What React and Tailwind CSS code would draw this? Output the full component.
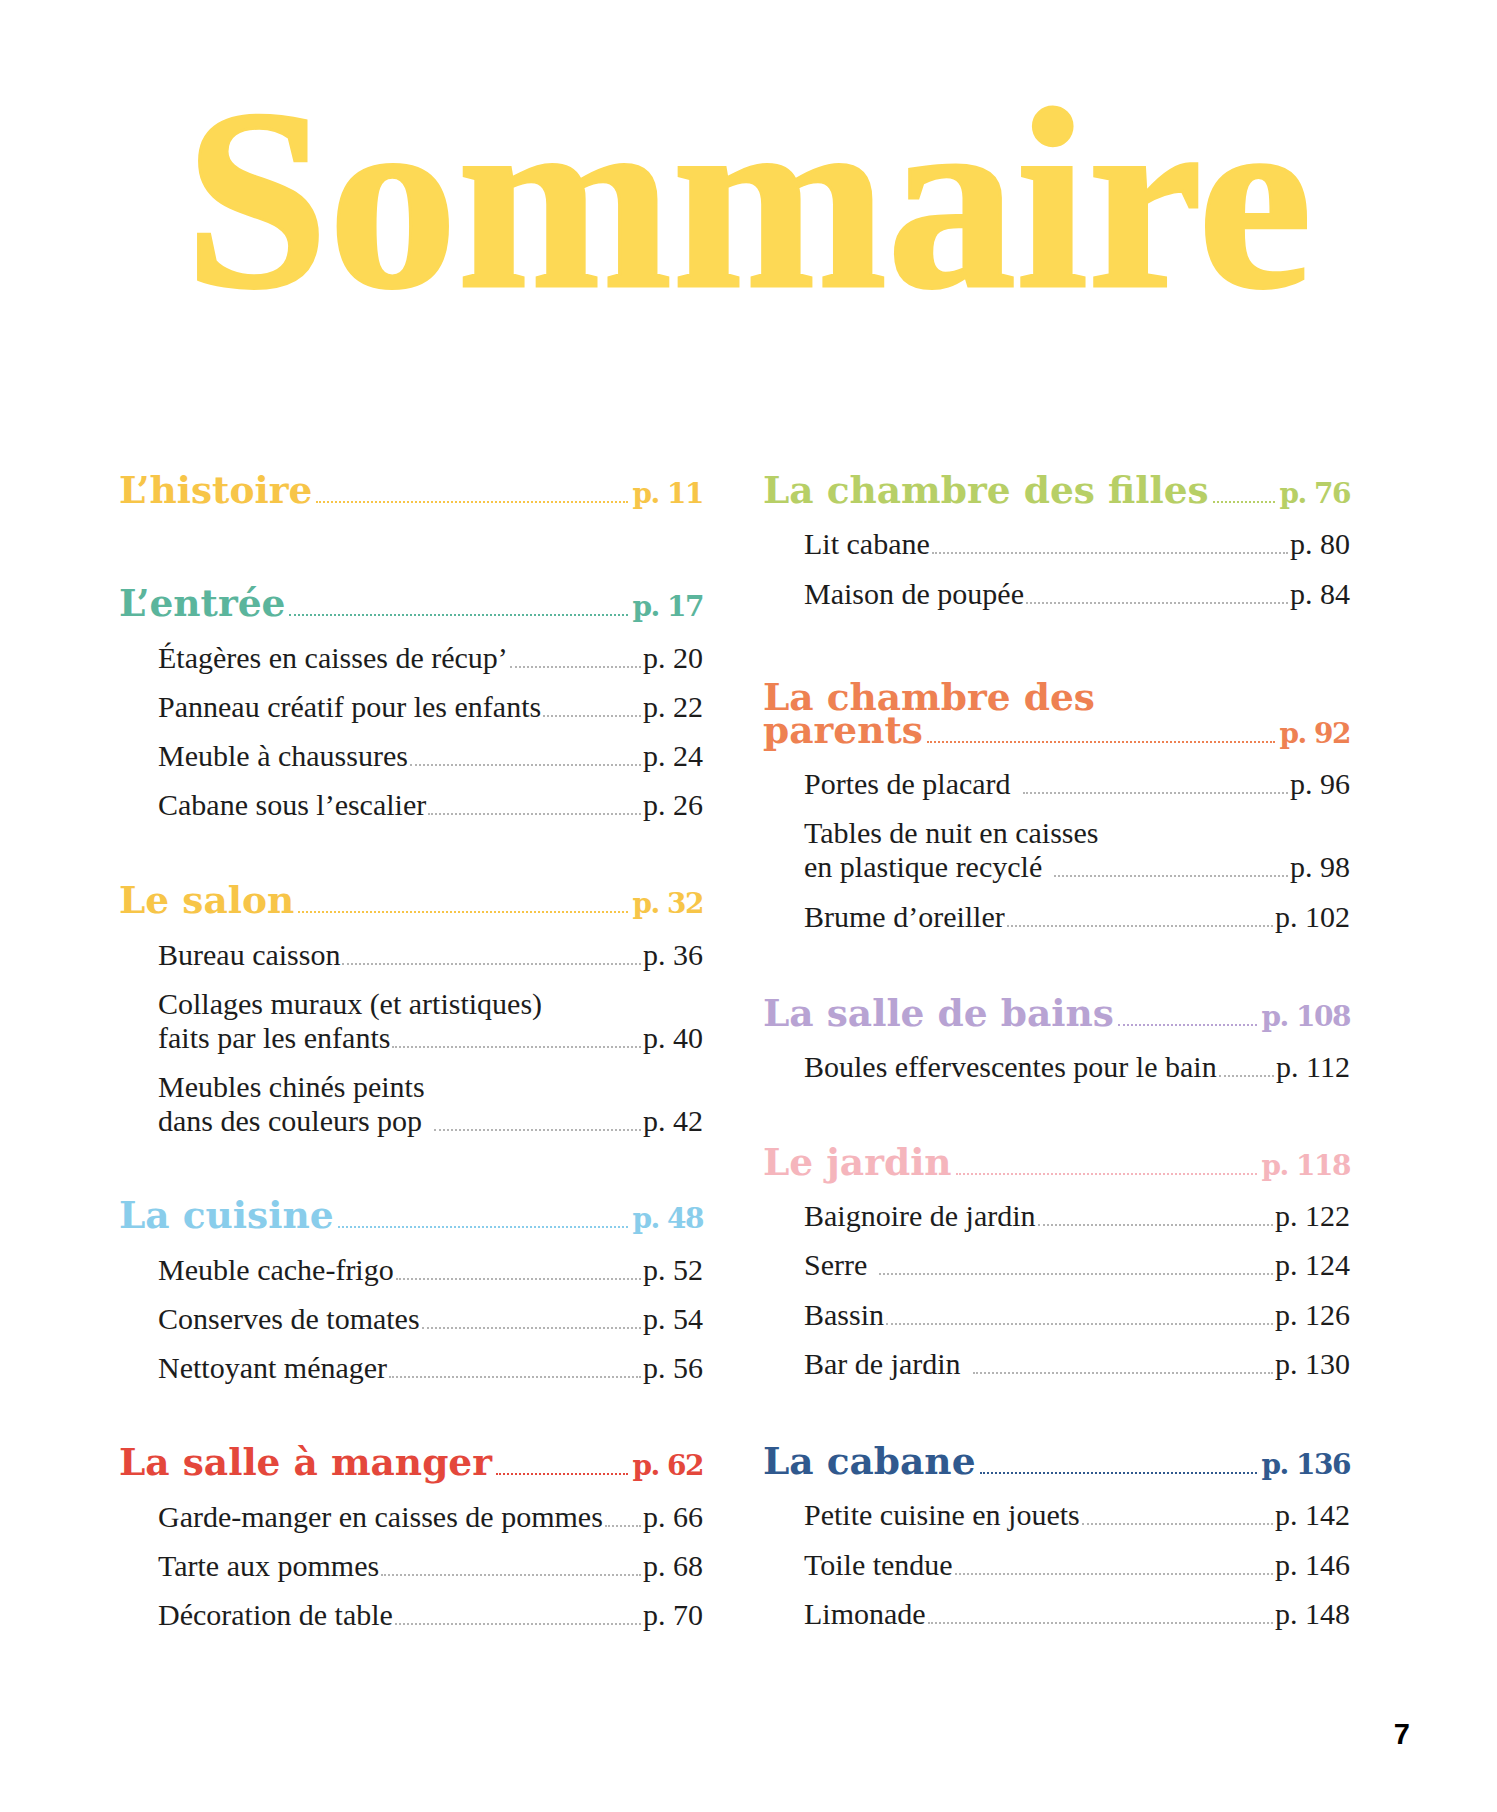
const headFont = "font-['DejaVu_Serif',serif] font-bold";
const bodyFont = "font-['Liberation_Serif','Times_New_Roman',serif]";

const leftSections = [
  {
    title: 'L’histoire',
    page: 'p. 11',
    color: 'text-[#F7C548]',
    dots: 'border-[#F7C548]',
    gap: '',
    items: [],
  },
  {
    title: 'L’entrée',
    page: 'p. 17',
    color: 'text-[#5BB59C]',
    dots: 'border-[#5BB59C]',
    gap: 'mt-[77px]',
    items: [
      { label: 'Étagères en caisses de récup’', page: 'p. 20' },
      { label: 'Panneau créatif pour les enfants', page: 'p. 22' },
      { label: 'Meuble à chaussures', page: 'p. 24' },
      { label: 'Cabane sous l’escalier', page: 'p. 26' },
    ],
  },
  {
    title: 'Le salon',
    page: 'p. 32',
    color: 'text-[#F7C548]',
    dots: 'border-[#F7C548]',
    gap: 'mt-[62px]',
    items: [
      { label: 'Bureau caisson', page: 'p. 36' },
      { first: 'Collages muraux (et artistiques)', label: 'faits par les enfants', page: 'p. 40' },
      { first: 'Meubles chinés peints', label: 'dans des couleurs pop', page: 'p. 42', space: true },
    ],
  },
  {
    title: 'La cuisine',
    page: 'p. 48',
    color: 'text-[#89CDEB]',
    dots: 'border-[#89CDEB]',
    gap: 'mt-[61px]',
    items: [
      { label: 'Meuble cache-frigo', page: 'p. 52' },
      { label: 'Conserves de tomates', page: 'p. 54' },
      { label: 'Nettoyant ménager', page: 'p. 56' },
    ],
  },
  {
    title: 'La salle à manger',
    page: 'p. 62',
    color: 'text-[#E4473B]',
    dots: 'border-[#E4473B]',
    gap: 'mt-[61px]',
    items: [
      { label: 'Garde-manger en caisses de pommes', page: 'p. 66' },
      { label: 'Tarte aux pommes', page: 'p. 68' },
      { label: 'Décoration de table', page: 'p. 70' },
    ],
  },
];

const rightSections = [
  {
    title: 'La chambre des filles',
    page: 'p. 76',
    color: 'text-[#B7CF66]',
    dots: 'border-[#B7CF66]',
    gap: '',
    items: [
      { label: 'Lit cabane', page: 'p. 80' },
      { label: 'Maison de poupée', page: 'p. 84' },
    ],
  },
  {
    first: 'La chambre des',
    title: 'parents',
    page: 'p. 92',
    color: 'text-[#EE8152]',
    dots: 'border-[#EE8152]',
    gap: 'mt-[70px]',
    items: [
      { label: 'Portes de placard', page: 'p. 96', space: true },
      { first: 'Tables de nuit en caisses', label: 'en plastique recyclé', page: 'p. 98', space: true },
      { label: 'Brume d’oreiller', page: 'p. 102' },
    ],
  },
  {
    title: 'La salle de bains',
    page: 'p. 108',
    color: 'text-[#B8A3D3]',
    dots: 'border-[#B8A3D3]',
    gap: 'mt-[63px]',
    items: [{ label: 'Boules effervescentes pour le bain', page: 'p. 112' }],
  },
  {
    title: 'Le jardin',
    page: 'p. 118',
    color: 'text-[#F5B5BC]',
    dots: 'border-[#F5B5BC]',
    gap: 'mt-[62px]',
    items: [
      { label: 'Baignoire de jardin', page: 'p. 122' },
      { label: 'Serre', page: 'p. 124', space: true },
      { label: 'Bassin', page: 'p. 126' },
      { label: 'Bar de jardin', page: 'p. 130', space: true },
    ],
  },
  {
    title: 'La cabane',
    page: 'p. 136',
    color: 'text-[#30598E]',
    dots: 'border-[#30598E]',
    gap: 'mt-[64px]',
    items: [
      { label: 'Petite cuisine en jouets', page: 'p. 142' },
      { label: 'Toile tendue', page: 'p. 146' },
      { label: 'Limonade', page: 'p. 148' },
    ],
  },
];

function Entry({ item, indent }) {
  return (
    <div className={`${indent} ${bodyFont} text-[30px] leading-[34px] text-[#1c1c1c]`}>
      {item.first && <div className="whitespace-nowrap">{item.first}</div>}
      <div className="flex items-baseline">
        <span className="whitespace-nowrap">{item.label}</span>
        <span
          className={`mr-[2px] min-w-[10px] flex-1 border-b-2 border-dotted border-[#b4b4b4] ${
            item.space ? 'ml-[12px]' : 'ml-[2px]'
          }`}
        />
        <span className="whitespace-nowrap">{item.page}</span>
      </div>
    </div>
  );
}

function Section({ section, indent, itemsGap }) {
  return (
    <section className={section.gap}>
      <div className={`${headFont} text-[37.5px] leading-[33px] ${section.color}`}>
        {section.first && <div className="whitespace-nowrap">{section.first}</div>}
        <div className="flex items-baseline">
          <span className="whitespace-nowrap">{section.title}</span>
          <span className={`mx-[4px] min-w-[10px] flex-1 border-b-2 border-dotted ${section.dots}`} />
          <span className="whitespace-nowrap text-[28px] tracking-[-1.5px]">{section.page}</span>
        </div>
      </div>
      {section.items.length > 0 && (
        <div className={`flex flex-col ${itemsGap}`}>
          {section.items.map((item) => (
            <Entry key={item.page} item={item} indent={indent} />
          ))}
        </div>
      )}
    </section>
  );
}

export default function App() {
  return (
    <div className="h-[1812px] w-[1497px] overflow-hidden bg-white">
      {/* ── Title ── */}
      <h1 className="pt-[70px] text-center font-['Liberation_Serif',serif] text-[258px] leading-[258px] font-bold text-[#FDD955] [-webkit-text-stroke:3px_#FDD955]">
        Sommaire
      </h1>

      {/* ── Two columns of contents ── */}
      <div className="mt-[146px] grid grid-cols-[584px_587px] gap-x-[60px] pl-[119px]">
        <div>
          {leftSections.map((s) => (
            <Section key={s.page} section={s} indent="pl-[39px]" itemsGap="mt-[18px] gap-[15px]" />
          ))}
        </div>
        <div>
          {rightSections.map((s) => (
            <Section key={s.page} section={s} indent="pl-[41px]" itemsGap="mt-[17px] gap-[15.5px]" />
          ))}
        </div>
      </div>

      {/* ── Folio ── */}
      <div className="mt-[88px] pr-[87px] text-right font-['Liberation_Sans',Arial,sans-serif] text-[29px] leading-[29px] font-bold text-black">
        7
      </div>
    </div>
  );
}
